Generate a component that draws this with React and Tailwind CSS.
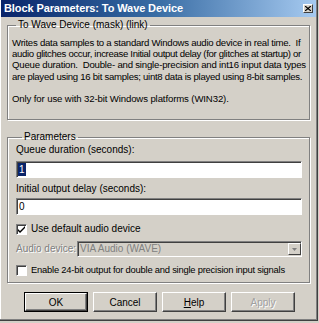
import React from "react";

const font = { fontFamily: '"Liberation Sans", Arial, sans-serif' };

function Btn({ children, def, disabled }) {
  return (
    <div
      className={
        "w-[64px] h-[20px] flex items-center justify-center text-[10px] " +
        (def ? "border border-black" : "")
      }
    >
      <div
        className={
          "w-full h-full flex items-center justify-center border border-t-white border-l-white border-r-[#404040] border-b-[#404040] shadow-[inset_-1px_-1px_0_#808080] " +
          (disabled ? "text-[#a0a0a0] [text-shadow:1px_1px_0_#fff]" : "text-black")
        }
      >
        {children}
      </div>
    </div>
  );
}

function Check({ checked }) {
  return (
    <div className="w-[11px] h-[11px] shrink-0 bg-white border border-t-[#808080] border-l-[#808080] border-r-white border-b-white shadow-[inset_1px_1px_0_#404040] flex items-center justify-center">
      {checked && (
        <svg width="7" height="7" viewBox="0 0 7 7">
          <path d="M0 3 L2 5 L7 0 L7 2 L2 7 L0 5 Z" fill="#000" />
        </svg>
      )}
    </div>
  );
}

export default function App() {
  return (
    <div style={font} className="w-[319px] h-[323px] bg-[#d4d0c8] overflow-hidden">
      <div className="w-[318px] h-[321px] flex flex-col border-r border-b border-r-[#404040] border-b-[#404040] shadow-[inset_-1px_-1px_0_#808080,inset_1px_1px_0_#fff]">
        {/* Title bar */}
        <div className="h-[17px] mx-[1px] flex items-center justify-between bg-gradient-to-r from-[#0a246a] via-[#3a6ea5] to-[#a6caf0] pl-[3px] pr-[3px]">
          <span className="text-white font-bold text-[11px] leading-none whitespace-nowrap tracking-[-0.1px]">
            Block Parameters: To Wave Device
          </span>
          <div className="w-[10px] h-[9px] bg-[#d4d0c8] border border-t-white border-l-white border-r-[#404040] border-b-[#404040] flex items-center justify-center">
            <svg width="6" height="5" viewBox="0 0 6 5">
              <path d="M0 0 L6 5 M6 0 L0 5" stroke="#000" strokeWidth="1.2" />
            </svg>
          </div>
        </div>

        <div className="flex flex-col px-[7px] pt-[2px] text-[10px] text-black">
          {/* Group 1 */}
          <fieldset className="h-[101px] border border-[#808080] shadow-[inset_1px_1px_0_#fff,1px_1px_0_#fff] pl-[4px] pr-[2px]">
            <legend className="ml-[4px] px-[2px] text-[10px] leading-[12px] text-[#000]">
              To Wave Device (mask) (link)
            </legend>
            <div className="pt-[6px] leading-[11.2px] whitespace-nowrap text-[9.6px]">
              <div className="tracking-[-0.25px]">Writes data samples to a standard Windows audio device in real time.&nbsp; If</div>
              <div className="tracking-[-0.33px]">audio glitches occur, increase Initial output delay (for glitches at startup) or</div>
              <div className="tracking-[-0.2px]">Queue duration.&nbsp; Double- and single-precision and int16 input data types</div>
              <div className="tracking-[-0.28px]">are played using 16 bit samples; uint8 data is played using 8-bit samples.</div>
              <div>&nbsp;</div>
              <div className="tracking-[-0.12px]">Only for use with 32-bit Windows platforms (WIN32).</div>
            </div>
          </fieldset>

          {/* Group 2 */}
          <fieldset className="mt-[11px] h-[152px] border border-[#808080] shadow-[inset_1px_1px_0_#fff,1px_1px_0_#fff] pl-[8px] pr-[7px]">
            <legend className="ml-[6px] px-[2px] text-[10px] leading-[12px]">Parameters</legend>
            <div className="pt-[1px] leading-[12px]">Queue duration (seconds):</div>
            <div className="mt-[5px] h-[17px] bg-white border border-t-[#808080] border-l-[#808080] border-r-white border-b-white shadow-[inset_1px_1px_0_#404040] flex items-center pl-[1px]">
              <span className="bg-[#0a246a] text-white px-[1px] leading-[13px]">1</span>
            </div>
            <div className="mt-[5px] leading-[12px]">Initial output delay (seconds):</div>
            <div className="mt-[3px] h-[17px] bg-white border border-t-[#808080] border-l-[#808080] border-r-white border-b-white shadow-[inset_1px_1px_0_#404040] flex items-center pl-[2px]">
              <span className="leading-[13px]">0</span>
            </div>
            <div className="mt-[8px] flex items-center gap-[4px]">
              <Check checked />
              <span className="leading-[12px]">Use default audio device</span>
            </div>
            <div className="mt-[6px] flex items-center">
              <span className="w-[61px] text-[#808080] [text-shadow:1px_1px_0_#fff] leading-[12px] whitespace-nowrap">
                Audio device:
              </span>
              <div className="flex-1 h-[16px] bg-[#d4d0c8] border border-t-[#808080] border-l-[#808080] border-r-white border-b-white shadow-[inset_1px_1px_0_#404040] flex items-center justify-between pl-[2px]">
                <span className="text-[#808080] leading-[12px]">VIA Audio (WAVE)</span>
                <div className="w-[13px] h-[12px] border border-t-white border-l-white border-r-[#404040] border-b-[#404040] flex items-center justify-center">
                  <svg width="5" height="3" viewBox="0 0 5 3">
                    <path d="M0 0 L5 0 L2.5 3 Z" fill="#808080" />
                  </svg>
                </div>
              </div>
            </div>
            <div className="mt-[7px] flex items-center gap-[4px]">
              <Check />
              <span className="leading-[12px] whitespace-nowrap text-[9.4px] tracking-[-0.22px]">
                Enable 24-bit output for double and single precision input signals
              </span>
            </div>
          </fieldset>

          {/* Buttons */}
          <div className="mt-[9px] pl-[17px] flex gap-[5px]">
            <Btn def>OK</Btn>
            <Btn>Cancel</Btn>
            <Btn>
              <span>
                <u>H</u>elp
              </span>
            </Btn>
            <Btn disabled>Apply</Btn>
          </div>
        </div>
      </div>
    </div>
  );
}
